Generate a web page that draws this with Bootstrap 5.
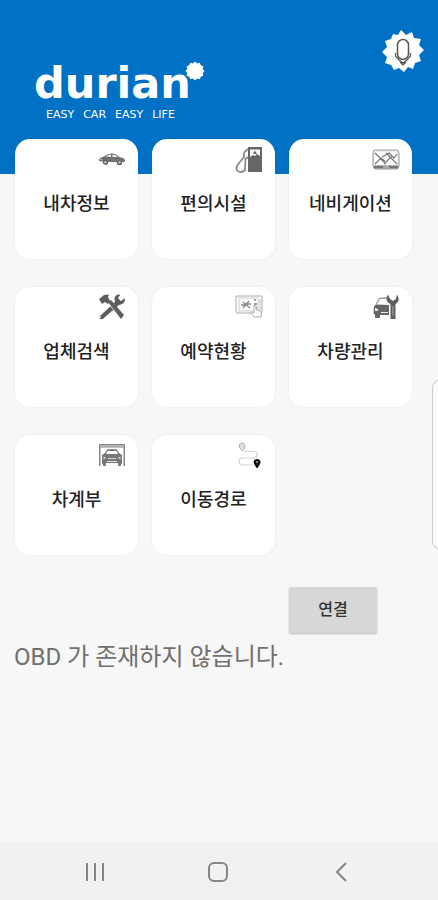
<!DOCTYPE html>
<html lang="ko">
<head>
<meta charset="utf-8">
<meta name="viewport" content="width=device-width, initial-scale=1">
<title>durian</title>
<link href="https://cdn.jsdelivr.net/npm/bootstrap@5.3.0/dist/css/bootstrap.min.css" rel="stylesheet">
<style>
  body { background: #f7f7f7; font-family: Roboto, "Noto Sans CJK KR", sans-serif; color: #222; }
  .app-header { background: #0071c5; height: 174px; padding: 30px 14px 0 34px; color: #fff; }
  .brand { padding-top: 28px; font-family: "DejaVu Sans", sans-serif; }
  .brand-name { font-size: 43px; line-height: 50px; font-weight: 700; }
  .brand-star { margin-left: -6px; margin-top: 3px; }
  .brand-tag { font-size: 11px; line-height: 13px; padding-left: 12px; gap: 9px; }
  .voice-btn { line-height: 0; }
  .tiles { margin-top: -35px; padding: 0 26px 0 15px; }
  .tiles .row { --bs-gutter-x: 14px; --bs-gutter-y: 28px; }
  .tile { height: 120px; border-radius: 15px; border: 0; background: #fff; padding: 6px 12px; color: #222;
          box-shadow: 0 0 2px rgba(0,0,0,.08); }
  .tile svg { width: 28px; height: 28px; }
  .tile-label { font-size: 18px; line-height: 26px; font-weight: 500; margin-top: 18px; }
  .connect { padding: 32px 26px 0 15px; }
  .connect .row { --bs-gutter-x: 14px; }
  .connect-btn { width: 88px; height: 46px; border-radius: 2px; background: #d6d8d7; font-size: 16px; line-height: 24px;
                 font-weight: 500; color: #333; box-shadow: 0 1px 2px rgba(0,0,0,.25); }
  .status { font-size: 24px; line-height: 32px; padding: 8px 14px 0; color: #707070; }
  .sysbar { background: #f1f1f1; height: 58px; padding: 2px 36px 0 34px; }
  .sysbar .btn { line-height: 0; }
  .edge-panel { right: -12px; top: 379px; width: 18px; height: 171px; border: 1px solid #c9c9c9; border-radius: 9px; background: #fafafa; }
</style>
<script src="https://cdn.jsdelivr.net/npm/bootstrap@5.3.0/dist/js/bootstrap.bundle.min.js"></script>
</head>
<body>
<div class="d-flex flex-column min-vh-100 position-relative overflow-hidden">
  <header class="app-header d-flex justify-content-between align-items-start">
    <div class="brand">
      <div class="d-flex align-items-start">
        <span class="brand-name">durian</span>
        <svg class="brand-star" width="20" height="20" viewBox="-10 -10 20 20" fill="#fff" aria-hidden="true"><path d="M0-9.500 2.200-7.500 4.800-8.200 5.800-5.700 8.400-4.600 7.800-2 9.500 0 7.800 2 8.400 4.600 5.800 5.700 4.800 8.200 2.200 7.500 0 9.500-2.200 7.500-4.800 8.200-5.800 5.700-8.400 4.600-7.800 2-9.500 0-7.800-2-8.400-4.600-5.800-5.700-4.800-8.200-2.200-7.500Z"/></svg>
      </div>
      <div class="brand-tag d-flex"><span>EASY</span> <span>CAR</span> <span>EASY</span> <span>LIFE</span></div>
    </div>
    <button type="button" class="btn p-0 border-0 voice-btn" aria-label="음성 인식">
      <svg width="42" height="42" viewBox="-21 -21 42 42"><path fill="#fff" d="M-2-21 3-16 9-19 11-13 18-12 16-6 21-1 16 4 18 10 12 12 10 18 5 16 1 21-4 17-9 19-12 14-18 12-16 6-21 1-16-4-18-10-12-12-10-17-5-16Z"/><g fill="none" stroke="#555"><rect x="-5.500" y="-11.500" width="11" height="20" rx="5.500" stroke-width="1.500"/><path d="M-7.500 2V5L-4 9 0 12 4 9 7.500 5V2M-3 11 0 14 3 11" stroke-width="1.200"/></g></svg>
    </button>
  </header>

  <main class="flex-grow-1">
    <section class="tiles">
      <div class="row row-cols-3">
        <div class="col mt-0"><button type="button" class="tile w-100 d-flex flex-column">
          <svg class="align-self-end" viewBox="0 0 28 28" aria-hidden="true"><path fill="#707070" d="M1 14.500Q2 12.500 6 11.500Q10 8 15 8.500Q19 9 21 12Q26 12.500 27 15L26.500 17H24A2.600 2.600 0 0 0 19 17H10A2.600 2.600 0 0 0 5 16.500L1 16Z"/><path fill="#eee" d="M8 11.500Q10 9.500 13 9.500V12ZM14.500 9.500Q18 9.700 19.500 12H14.500ZM2 14H4L3 15.200Z"/><g fill="#bbb" stroke="#555" stroke-width="1.200"><circle cx="7.500" cy="17.200" r="2"/><circle cx="21.500" cy="17.500" r="2"/></g></svg>
          <span class="tile-label align-self-center">내차정보</span></button></div>
        <div class="col mt-0"><button type="button" class="tile w-100 d-flex flex-column">
          <svg class="align-self-end" viewBox="0 0 28 28" aria-hidden="true"><path fill="#666" d="M13 2H27V27H13Z"/><path fill="#fff" d="M15 4.500H25V11L22 9 20 11 18 10 15 12Z"/><path fill="#666" d="M20 5.500 22 9H18Z"/><path fill="none" stroke="#8a8a8a" stroke-width="1.800" d="M13 4 9.500 7Q8.500 9 9 12L2.500 20Q0 25 3.500 26.500Q7 28 10 25L10.500 14L13 12"/></svg>
          <span class="tile-label align-self-center">편의시설</span></button></div>
        <div class="col mt-0"><button type="button" class="tile w-100 d-flex flex-column">
          <svg class="align-self-end" viewBox="0 0 28 28" aria-hidden="true"><rect x="1" y="5" width="26" height="19" rx="3" fill="#eee" stroke="#999"/><rect x="3" y="7" width="22" height="13" fill="#fff"/><path fill="none" stroke="#777" stroke-width="1.200" d="M3 8 14 19M3 19 9 13 13 16M10 12 17 8 22 13 25 9M14 8 25 19M12 19 20 11"/><path fill="#777" d="M2 20.500H26V23.500H2Z"/><path stroke="#ddd" d="M11 22H17"/></svg>
          <span class="tile-label align-self-center">네비게이션</span></button></div>
        <div class="col"><button type="button" class="tile w-100 d-flex flex-column">
          <svg class="align-self-end" viewBox="0 0 28 28" aria-hidden="true"><g fill="#5e5e5e"><path d="M1 6 6 2 11 1.500 10 4 12 8 10 11 7 9 4 11Z"/><path d="M10 9 13 7 26 22 23 26Z"/><path d="M2 23 17 9Q15 3 20 1.500L22.500 1.500 20 5 23 8 27 5Q27.500 11 21 12L7 24Q4 28 1 25L3 25Z"/></g><path stroke="#fff" stroke-width=".8" d="M12 12.500 15 16"/></svg>
          <span class="tile-label align-self-center">업체검색</span></button></div>
        <div class="col"><button type="button" class="tile w-100 d-flex flex-column">
          <svg class="align-self-end" viewBox="0 0 28 28" aria-hidden="true"><g fill="none" stroke="#aaa"><rect x="1" y="3" width="26" height="17" rx="1"/><rect x="4" y="5" width="19" height="13" stroke="#ccc"/><path stroke="#888" stroke-width="1.300" d="M8 9 15 15M8 15 14 8M6 12H10M12 11H16M19 7H21M19 11H22M20 15H22"/><path stroke="#bbb" d="M25 6V17"/></g><path fill="#fff" stroke="#aaa" d="M19 20V12.500Q20 11.500 21 12.500V17L25.500 18Q27 19 26 24H19L15.500 19.500Q16 18 19 20Z"/></svg>
          <span class="tile-label align-self-center">예약현황</span></button></div>
        <div class="col"><button type="button" class="tile w-100 d-flex flex-column">
          <svg class="align-self-end" viewBox="0 0 28 28" aria-hidden="true"><path fill="#666" d="M2 13 5 11.500 17 12V22H8V25H3V22L1.500 20Z"/><path fill="none" stroke="#999" stroke-width="1.300" d="M4 12 7 6Q8 5 15 5"/><path fill="#eee" d="M3 15 6 16V18H3ZM9 19H16V20H9Z"/><path fill="#5e5e5e" d="M16 1.500Q12 8 18.500 11V26H23.500V11Q29 8 25 1.500L24 6 21 8 18 6Z"/><path stroke="#aaa" d="M21 13V23"/></svg>
          <span class="tile-label align-self-center">차량관리</span></button></div>
        <div class="col"><button type="button" class="tile w-100 d-flex flex-column">
          <svg class="align-self-end" viewBox="0 0 28 28" aria-hidden="true"><path fill="#858585" d="M1 3H27V25H25.500V6.500H2.500V25H1Z"/><path stroke="#ddd" d="M2 5H26"/><path fill="#777" d="M4 14 7 12 9 8.500Q14 7.500 19 8.500L21 12 24 14V22L22.500 25H20V22H8V25H5.500L4 22Z"/><path fill="#fff" d="M9.500 10H18.500L20 13H8Z"/><path fill="#ddd" d="M5.500 15.500 8.500 17 5.500 18ZM22.500 15.500 19.500 17 22.500 18ZM10 17H18V18H10ZM9 20H19V21H9Z"/></svg>
          <span class="tile-label align-self-center">차계부</span></button></div>
        <div class="col"><button type="button" class="tile w-100 d-flex flex-column">
          <svg class="align-self-end" viewBox="0 0 28 28" aria-hidden="true"><path fill="none" stroke="#d4d4d4" stroke-width="1.200" d="M9 10.500H19Q22 11 22 14 22 17 18 17H7Q4 17.500 4 20.500 4 24 8 24H18"/><path fill="#eee" stroke="#aaa" d="M7.500 10Q3 6 4.500 3.500Q6 1.500 8.500 2.500Q11 4 9.500 7Z"/><circle cx="7" cy="5" r="1.200" fill="#fff" stroke="#bbb" stroke-width=".7"/><path fill="#111" d="M22 27.500Q18.500 23 18.500 21 19 18 22 18 25 18 25.500 21 25.500 23 22 27.500Z"/><circle cx="22" cy="21" r="1" fill="#aaa"/></svg>
          <span class="tile-label align-self-center">이동경로</span></button></div>
      </div>
    </section>
    <section class="connect">
      <div class="row"><div class="col-4 offset-8"><button type="button" class="btn p-0 border-0 connect-btn">연결</button></div></div>
    </section>
    <p class="status mb-0">OBD 가 존재하지 않습니다.</p>
  </main>

  <nav class="sysbar d-flex justify-content-around align-items-center" aria-label="시스템">
    <button type="button" class="btn p-0 border-0" aria-label="최근 앱"><svg width="24" height="24" viewBox="0 0 24 24"><path stroke="#858585" stroke-width="2" d="M4 3V21M12 3V21M20 3V21"/></svg></button>
    <button type="button" class="btn p-0 border-0" aria-label="홈"><svg width="24" height="24" viewBox="0 0 24 24"><rect x="3" y="3" width="18" height="18" rx="5" fill="none" stroke="#858585" stroke-width="2"/></svg></button>
    <button type="button" class="btn p-0 border-0" aria-label="뒤로"><svg width="24" height="24" viewBox="0 0 24 24"><path fill="none" stroke="#858585" stroke-width="2" d="M17 3 8 12 17 21"/></svg></button>
  </nav>
  <div class="edge-panel position-absolute"></div>
</div>
</body>
</html>
